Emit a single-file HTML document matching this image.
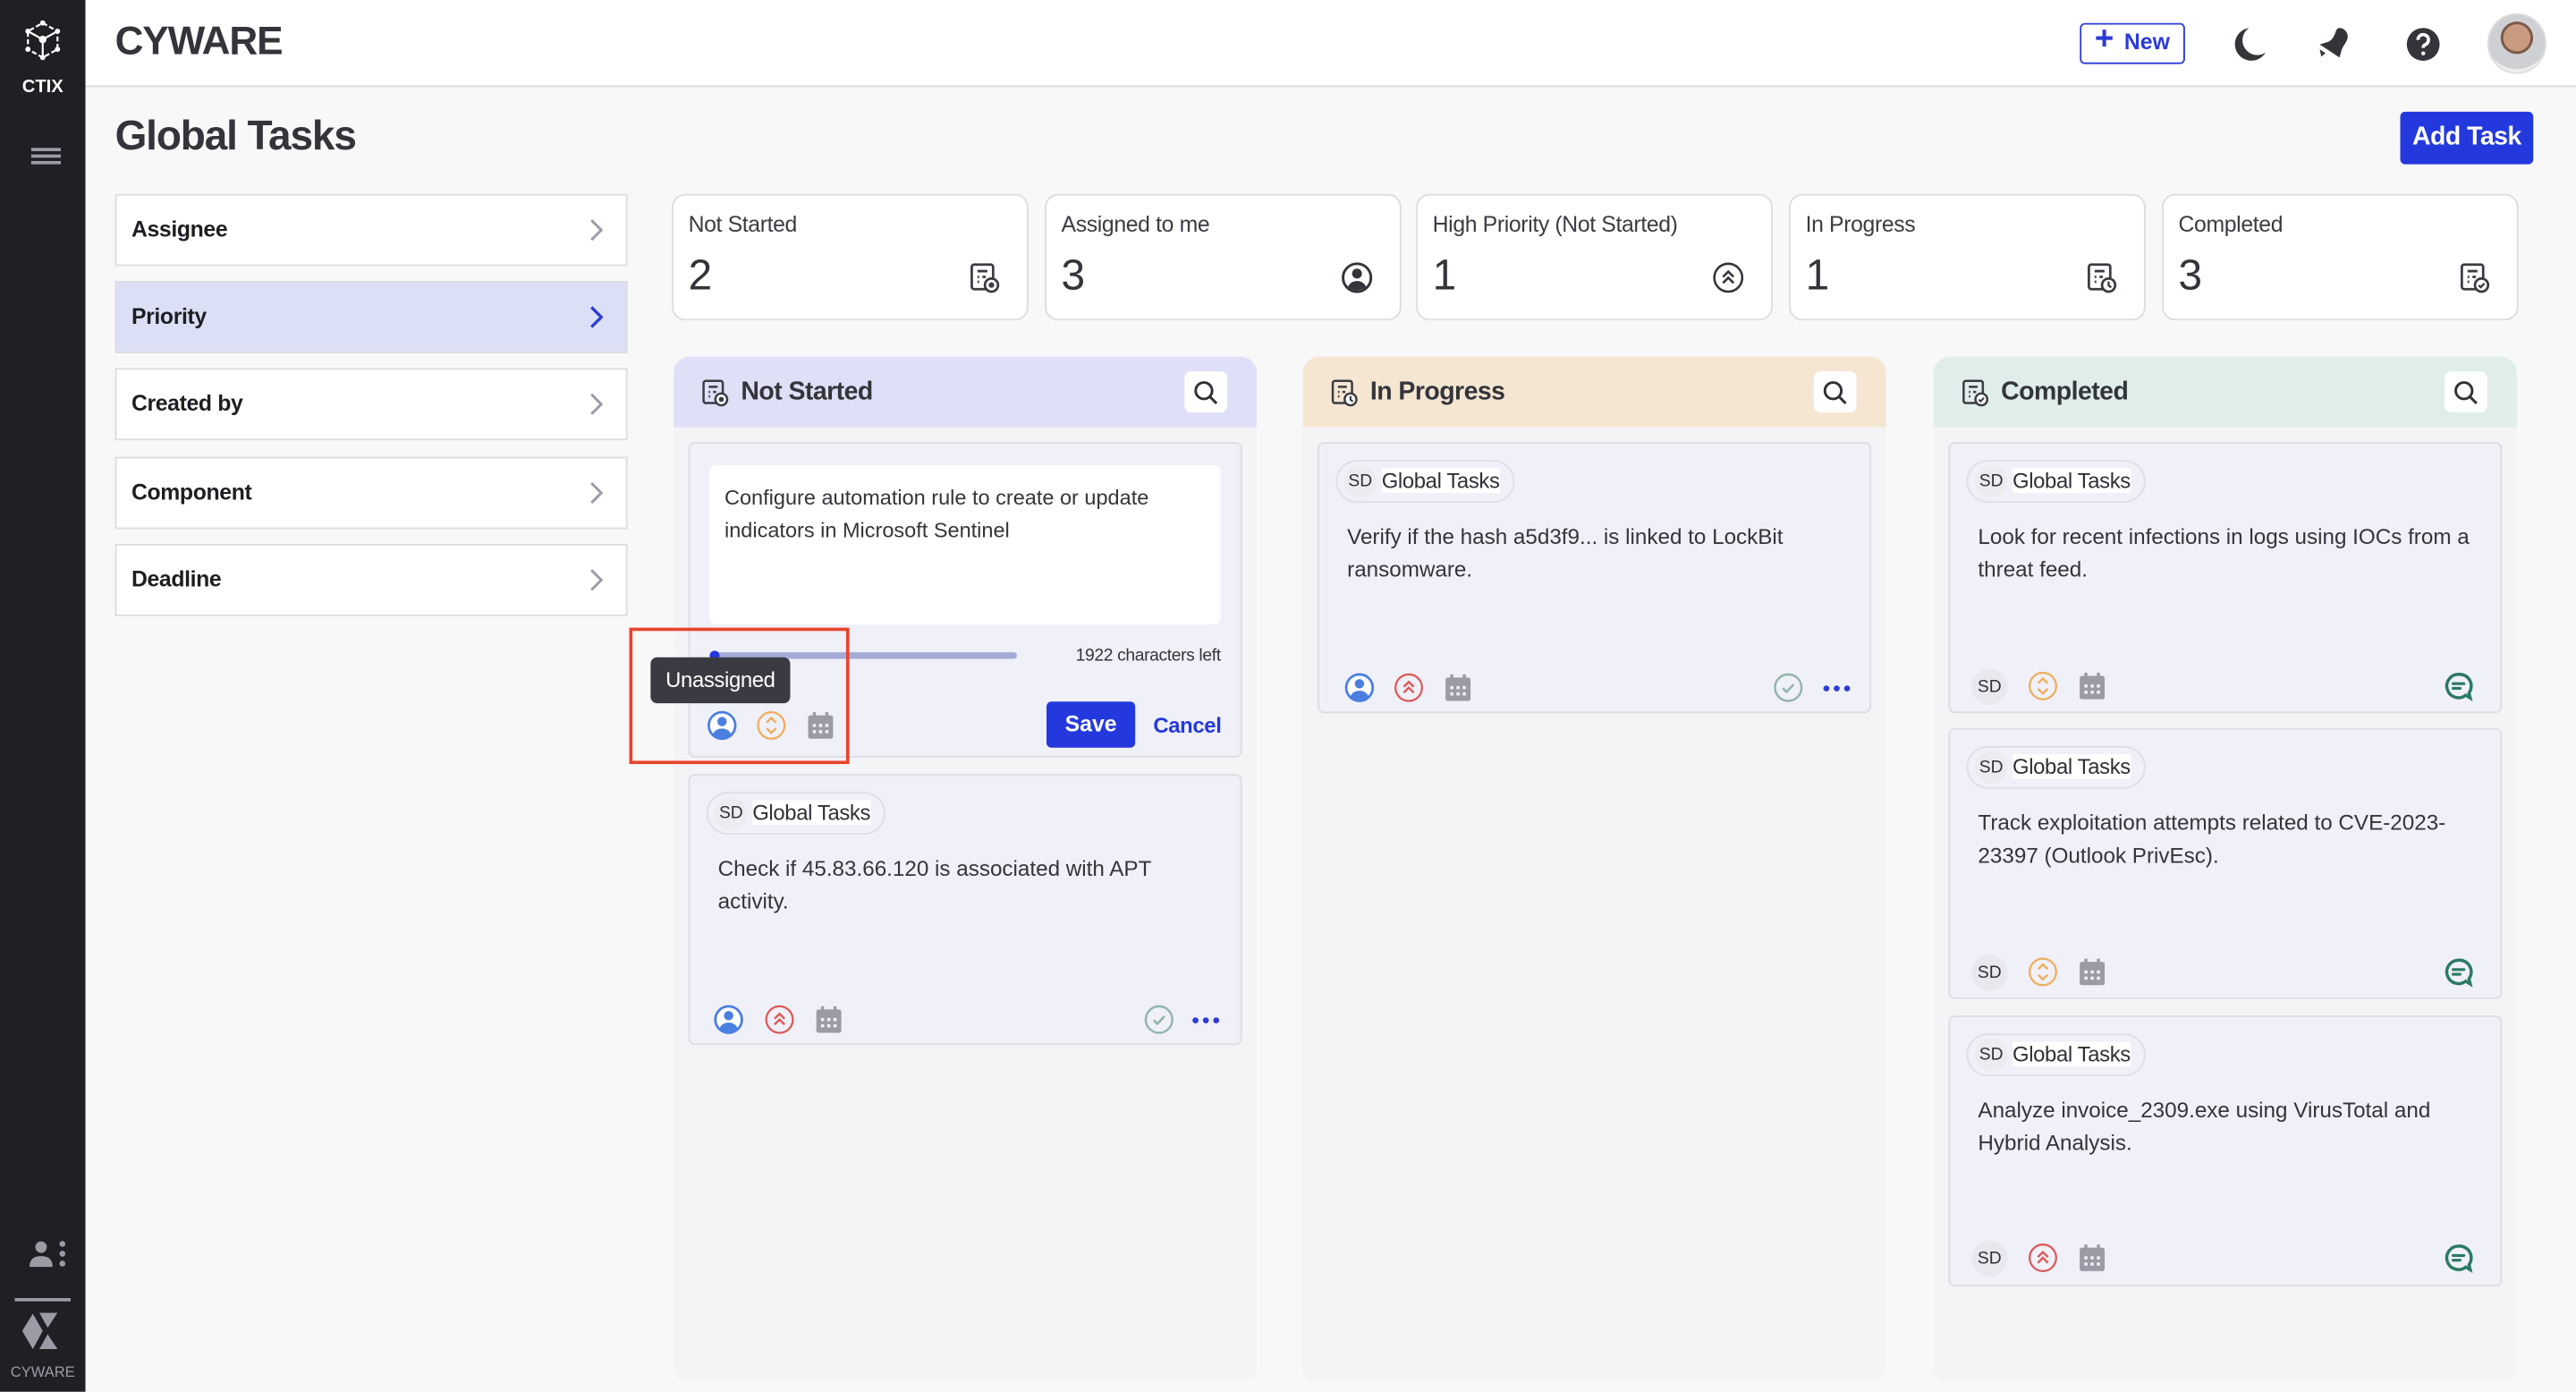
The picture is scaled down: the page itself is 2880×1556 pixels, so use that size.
<!DOCTYPE html>
<html><head><meta charset="utf-8"><style>
*{box-sizing:border-box;margin:0;padding:0}
html,body{width:2880px;height:1556px;overflow:hidden;background:#f8f8f8}
#w{position:absolute;left:0;top:0;width:1568px;height:847px;transform:scale(1.836735);transform-origin:0 0;font-family:"Liberation Sans",sans-serif;color:#2f3137}
.a{position:absolute}
.side{left:0;top:0;width:52px;height:847px;background:#1f2024}
.hdr{left:52px;top:0;width:1516px;height:53px;background:#fff;border-bottom:1.5px solid #dcdce0}
.fl{left:70px;width:312px;height:44px;background:#fff;border:1px solid #dcdce2;font-size:13.5px;font-weight:bold;color:#1d1e22;padding-left:9px;line-height:42px;letter-spacing:-0.2px}
.fl svg{position:absolute;right:14px;top:14px}
.st{top:118px;width:217px;height:77px;background:#fff;border:1px solid #dcdce2;border-radius:8px}
.st .t{position:absolute;left:9px;top:10px;font-size:13.5px;color:#3a3c42;letter-spacing:-0.2px}
.st .n{position:absolute;left:9px;top:33px;font-size:26px;color:#33353a}
.st svg{position:absolute;right:16px;top:40px}
.col{top:217px;width:355px;height:624px;background:#f4f4f6;border-radius:10px 10px 8px 8px;overflow:hidden}
.ch{position:absolute;left:0;top:0;width:355px;height:43px}
.ch .tt{position:absolute;left:41px;top:13px;font-size:15.5px;font-weight:bold;color:#33353a;letter-spacing:-0.3px}
.ch .ic{position:absolute;left:16px;top:13px}
.ch .sb{position:absolute;right:18px;top:9px;width:26px;height:25px;background:#fff;border-radius:4px}
.ch .sb svg{position:absolute;left:5px;top:5px}
.card{width:337px;background:#f0f0f8;border:1px solid #dcdce2;border-radius:4px}
.chip{position:absolute;left:10px;top:10px;height:26px;border:1px solid #dedee6;border-radius:13px;padding:0 8px 0 4px;font-size:13px;line-height:24px;white-space:nowrap;letter-spacing:-0.2px}
.chip b{font-weight:normal;font-size:10.5px;display:inline-block;width:20px;height:20px;border-radius:10px;background:#ececf0;text-align:center;line-height:20px;margin-right:3px;vertical-align:1px;letter-spacing:0}
.chip span{background:#fff}
.txt{position:absolute;left:17px;top:47px;font-size:13.2px;line-height:20px;color:#33353a;width:310px}
.ico{position:absolute}
</style></head><body><div id="w">
<svg width="0" height="0" style="position:absolute"><defs>
<symbol id="usr" viewBox="0 0 20 20"><circle cx="10" cy="10" r="8.5" fill="#fff" stroke="#4a7fe0" stroke-width="1.6"/><circle cx="10" cy="7.5" r="3" fill="#4a7fe0"/><path d="M4.2 15.6c1.2-2.6 3.3-3.6 5.8-3.6s4.6 1 5.8 3.6A8.5 8.5 0 0 1 4.2 15.6z" fill="#4a7fe0"/></symbol>
<symbol id="phi" viewBox="0 0 20 20"><circle cx="10" cy="10" r="8.5" fill="none" stroke="#dc5a5a" stroke-width="1.3"/><path d="M6.8 9.5L10 6.3l3.2 3.2M6.8 13.2L10 10l3.2 3.2" fill="none" stroke="#dc5a5a" stroke-width="1.4"/></symbol>
<symbol id="pmd" viewBox="0 0 20 20"><circle cx="10" cy="10" r="8.5" fill="none" stroke="#eeae5c" stroke-width="1.3"/><path d="M7 8.2L10 5.2l3 3M7 11.8l3 3 3-3" fill="none" stroke="#eeae5c" stroke-width="1.4"/></symbol>
<symbol id="cal" viewBox="0 0 20 20"><rect x="2" y="3.5" width="16" height="15" rx="1.5" fill="#9a9ba5"/><rect x="5" y="1.5" width="2" height="4" fill="#9a9ba5"/><rect x="13" y="1.5" width="2" height="4" fill="#9a9ba5"/><g fill="#f0f0f8"><rect x="5" y="9" width="2" height="2"/><rect x="9" y="9" width="2" height="2"/><rect x="13" y="9" width="2" height="2"/><rect x="5" y="13" width="2" height="2"/><rect x="9" y="13" width="2" height="2"/><rect x="13" y="13" width="2" height="2"/></g></symbol>
<symbol id="chk" viewBox="0 0 20 20"><circle cx="10" cy="10" r="8.5" fill="none" stroke="#93b5ab" stroke-width="1.4"/><path d="M6.5 10.3l2.4 2.4 4.6-4.8" fill="none" stroke="#93b5ab" stroke-width="1.5"/></symbol>
<symbol id="dot" viewBox="0 0 20 8"><circle cx="3" cy="4" r="2" fill="#2a3bd9"/><circle cx="10" cy="4" r="2" fill="#2a3bd9"/><circle cx="17" cy="4" r="2" fill="#2a3bd9"/></symbol>
<symbol id="cmt" viewBox="0 0 20 20"><path d="M10 2.5a7.5 7.5 0 1 0 4.6 13.4l2.9 1.8-.8-3.3A7.5 7.5 0 0 0 10 2.5z" fill="none" stroke="#2a7a63" stroke-width="2"/><path d="M6.5 8.5h7M6.5 11.5h4.5" stroke="#2a7a63" stroke-width="1.8" stroke-linecap="round"/></symbol>
<symbol id="tsk" viewBox="0 0 20 20"><rect x="2.5" y="2" width="13" height="15" rx="1.5" fill="none" stroke="#3a3c42" stroke-width="1.5"/><path d="M6 6h6M6 9.5h1M6 12.5h1M9 9.5h2" stroke="#3a3c42" stroke-width="1.5"/><circle cx="14.5" cy="14.5" r="4" fill="#fff" stroke="#3a3c42" stroke-width="1.5"/><circle cx="14.5" cy="14.5" r="1.7" fill="#3a3c42"/></symbol>
<symbol id="tskc" viewBox="0 0 20 20"><rect x="2.5" y="2" width="13" height="15" rx="1.5" fill="none" stroke="#3a3c42" stroke-width="1.5"/><path d="M6 6h6M6 9.5h1M6 12.5h1M9 9.5h2" stroke="#3a3c42" stroke-width="1.5"/><circle cx="14.5" cy="14.5" r="4" fill="#fff" stroke="#3a3c42" stroke-width="1.5"/><path d="M14.5 12.3v2.4l1.6 1.2" fill="none" stroke="#3a3c42" stroke-width="1.3"/></symbol>
<symbol id="tskk" viewBox="0 0 20 20"><rect x="2.5" y="2" width="13" height="15" rx="1.5" fill="none" stroke="#3a3c42" stroke-width="1.5"/><path d="M6 6h6M6 9.5h1M6 12.5h1M9 9.5h2" stroke="#3a3c42" stroke-width="1.5"/><circle cx="14.5" cy="14.5" r="4" fill="#fff" stroke="#3a3c42" stroke-width="1.5"/><path d="M12.8 14.6l1.2 1.2 2.2-2.3" fill="none" stroke="#3a3c42" stroke-width="1.3"/></symbol>
<symbol id="srch" viewBox="0 0 16 16"><circle cx="6.8" cy="6.8" r="5" fill="none" stroke="#2f3137" stroke-width="1.6"/><path d="M10.5 10.5l4 4" stroke="#2f3137" stroke-width="1.6"/></symbol>
</defs></svg>

<div class="a side">
<svg class="a" style="left:14px;top:12px" width="24" height="28" viewBox="0 0 24 28"><g stroke="#fff" stroke-width="1.2" fill="none"><path d="M12 2L21 7v11l-9 5-9-5V7z" stroke-dasharray="3 1.5"/><path d="M3 7l9 5 9-5M12 12v11"/></g><g fill="#fff"><circle cx="12" cy="2" r="1.6"/><circle cx="21" cy="7" r="1.6"/><circle cx="21" cy="18" r="1.6"/><circle cx="12" cy="23" r="1.6"/><circle cx="3" cy="18" r="1.6"/><circle cx="3" cy="7" r="1.6"/><circle cx="12" cy="12" r="2.3"/></g></svg>
<div class="a" style="left:0;width:52px;top:47px;text-align:center;color:#fff;font-size:11px;font-weight:bold">CTIX</div>
<div class="a" style="left:19px;top:90px;width:18px;height:2px;background:#9a9ba5;box-shadow:0 4px 0 #9a9ba5,0 8px 0 #9a9ba5"></div>
<svg class="a" style="left:16px;top:753px" width="26" height="22" viewBox="0 0 26 22"><circle cx="9" cy="6" r="3.5" fill="#9a9ba5"/><path d="M2 18c0-5 3-6.5 7-6.5s7 1.5 7 6.5z" fill="#9a9ba5"/><circle cx="22" cy="4" r="1.8" fill="#9a9ba5"/><circle cx="22" cy="10" r="1.8" fill="#9a9ba5"/><circle cx="22" cy="16" r="1.8" fill="#9a9ba5"/></svg>
<div class="a" style="left:9px;top:790px;width:34px;height:1.5px;background:#9a9ba5"></div>
<svg class="a" style="left:13px;top:797px" width="26" height="26" viewBox="0 0 26 26"><path d="M0.5 13L7 2.5 13 13 7 24z" fill="#9a9ba5"/><path d="M11 2h11l-6 9z" fill="#9a9ba5"/><path d="M16 15l6 9H11z" fill="#9a9ba5"/></svg>
<div class="a" style="left:0;width:52px;top:830px;text-align:center;color:#9a9ba5;font-size:9px">CYWARE</div>
</div>

<div class="a hdr">
<div class="a" style="left:18px;top:12px;font-size:24px;font-weight:bold;color:#33353a;letter-spacing:-0.6px">CYWARE</div>
<div class="a" style="left:1214px;top:14px;width:64px;height:25px;border:1.5px solid #2a3bd9;border-radius:3px;color:#2a3bd9;font-size:13.5px;font-weight:bold;line-height:22px;padding-left:26px">New<span class="a" style="left:8px;top:-2px;font-size:20px;font-weight:bold">+</span></div>
<svg class="a" style="left:1306px;top:15px" width="22" height="24" viewBox="0 0 22 24"><path d="M11 2a10 10 0 1 0 10 15A9 9 0 0 1 11 2z" fill="#33353a"/></svg>
<svg class="a" style="left:1357px;top:14px" width="24" height="24" viewBox="0 0 24 24"><path d="M15 3c3 0 5.5 3 5 6-.4 2.5-2.5 4.5-3.5 7l-1.5 5-12-8 5-1.5c2.5-1 3.5-3 4.5-5.5C13 4.5 13.5 3 15 3z" fill="#33353a"/><path d="M3 16l3.5 2.3-2.5 2.2z" fill="#33353a"/></svg>
<svg class="a" style="left:1412px;top:16px" width="22" height="22" viewBox="0 0 22 22"><circle cx="11" cy="11" r="10" fill="#33353a"/><path d="M7.8 8.3a3.2 3.2 0 1 1 4.2 3c-.8.4-1 .9-1 1.8" fill="none" stroke="#fff" stroke-width="2"/><circle cx="11" cy="16.5" r="1.2" fill="#fff"/></svg>
<div class="a" style="left:1462px;top:8px;width:36px;height:37px;border-radius:50%;background:radial-gradient(circle at 50% 40%,#c99a7f 0 30%,#7a5a4a 31% 36%,#cfd0d4 37% 70%,#eee 71%);border:1px solid #ddd"></div>
</div>

<div class="a" style="left:70px;top:69px;font-size:25px;font-weight:bold;color:#33353a;letter-spacing:-0.6px">Global Tasks</div>
<div class="a" style="left:1461px;top:68px;width:81px;height:32px;background:#2439dd;border-radius:3px;color:#fff;font-size:15.5px;font-weight:bold;text-align:center;line-height:32px;letter-spacing:-0.3px">Add Task</div>

<div class="a fl" style="top:118px">Assignee<svg width="8" height="14" viewBox="0 0 8 14"><path d="M1 1l6 6-6 6" fill="none" stroke="#9a9ba5" stroke-width="1.6"/></svg></div>
<div class="a fl" style="top:171px;background:#dce0f6">Priority<svg width="8" height="14" viewBox="0 0 8 14"><path d="M1 1l6 6-6 6" fill="none" stroke="#2a3bd9" stroke-width="1.8"/></svg></div>
<div class="a fl" style="top:224px">Created by<svg width="8" height="14" viewBox="0 0 8 14"><path d="M1 1l6 6-6 6" fill="none" stroke="#9a9ba5" stroke-width="1.6"/></svg></div>
<div class="a fl" style="top:278px">Component<svg width="8" height="14" viewBox="0 0 8 14"><path d="M1 1l6 6-6 6" fill="none" stroke="#9a9ba5" stroke-width="1.6"/></svg></div>
<div class="a fl" style="top:331px">Deadline<svg width="8" height="14" viewBox="0 0 8 14"><path d="M1 1l6 6-6 6" fill="none" stroke="#9a9ba5" stroke-width="1.6"/></svg></div>

<div class="a st" style="left:409px"><div class="t">Not Started</div><div class="n">2</div><svg width="20" height="20"><use href="#tsk"/></svg></div>
<div class="a st" style="left:636px"><div class="t">Assigned to me</div><div class="n">3</div><svg width="20" height="20" viewBox="0 0 20 20"><circle cx="10" cy="10" r="8.5" fill="none" stroke="#33353a" stroke-width="1.6"/><circle cx="10" cy="7.5" r="3" fill="#33353a"/><path d="M4.5 15.5c1.2-2.5 3.2-3.5 5.5-3.5s4.3 1 5.5 3.5A8 8 0 0 1 4.5 15.5z" fill="#33353a"/></svg></div>
<div class="a st" style="left:862px"><div class="t">High Priority (Not Started)</div><div class="n">1</div><svg width="20" height="20" viewBox="0 0 20 20"><circle cx="10" cy="10" r="8.5" fill="none" stroke="#33353a" stroke-width="1.4"/><path d="M6.8 9.5L10 6.3l3.2 3.2M6.8 13.2L10 10l3.2 3.2" fill="none" stroke="#33353a" stroke-width="1.4"/></svg></div>
<div class="a st" style="left:1089px"><div class="t">In Progress</div><div class="n">1</div><svg width="20" height="20"><use href="#tskc"/></svg></div>
<div class="a st" style="left:1316px"><div class="t">Completed</div><div class="n">3</div><svg width="20" height="20"><use href="#tskk"/></svg></div>

<div class="a col" style="left:410px"><div class="ch" style="background:#dfe0f8"><svg class="ic" width="18" height="18"><use href="#tsk"/></svg><div class="tt">Not Started</div><div class="sb"><svg width="16" height="16"><use href="#srch"/></svg></div></div></div>
<div class="a card" style="left:419px;top:269px;height:192px">
<div class="a" style="left:12px;top:13px;width:311px;height:97px;background:#fff;border-radius:4px;padding:10px 9px;font-size:12.8px;line-height:20px;color:#33353a">Configure automation rule to create or update indicators in Microsoft Sentinel</div>
<div class="a" style="left:12px;top:127px;width:187px;height:4px;background:#a4abd6;border-radius:2px"></div>
<div class="a" style="left:12px;top:126px;width:6px;height:6px;background:#2439dd;border-radius:3px"></div>
<div class="a" style="right:12px;top:123px;font-size:10.5px;color:#33353a;letter-spacing:-0.2px">1922 characters left</div>
<div class="a" style="left:217px;top:157px;width:54px;height:28px;background:#2439dd;border-radius:3px;color:#fff;font-size:13.5px;font-weight:bold;text-align:center;line-height:28px">Save</div>
<div class="a" style="left:282px;top:164px;color:#2439dd;font-size:13px;font-weight:bold;letter-spacing:-0.2px">Cancel</div>
<svg class="ico" style="left:10px;top:162px" width="19" height="19"><use href="#usr"/></svg>
<svg class="ico" style="left:40px;top:162px" width="19" height="19"><use href="#pmd"/></svg>
<svg class="ico" style="left:70px;top:162px" width="19" height="19"><use href="#cal"/></svg>
</div>
<div class="a" style="left:396px;top:400px;width:85px;height:28px;background:#3a3b42;border-radius:4px;color:#fff;font-size:13px;line-height:27px;text-align:center;letter-spacing:-0.2px">Unassigned</div>
<div class="a" style="left:383px;top:382px;width:134px;height:83px;border:2px solid #e8442e"></div>

<div class="a card" style="left:419px;top:471px;height:165px">
<div class="chip"><b>SD</b><span>Global Tasks</span></div>
<div class="txt">Check if 45.83.66.120 is associated with APT activity.</div>
<svg class="ico" style="left:14px;top:139px" width="19" height="19"><use href="#usr"/></svg>
<svg class="ico" style="left:45px;top:139px" width="19" height="19"><use href="#phi"/></svg>
<svg class="ico" style="left:75px;top:139px" width="19" height="19"><use href="#cal"/></svg>
<svg class="ico" style="left:276px;top:139px" width="19" height="19"><use href="#chk"/></svg>
<svg class="ico" style="left:305px;top:145px" width="18" height="8"><use href="#dot"/></svg>
</div>

<div class="a col" style="left:793px"><div class="ch" style="background:#f5e6d2"><svg class="ic" width="18" height="18"><use href="#tskc"/></svg><div class="tt">In Progress</div><div class="sb"><svg width="16" height="16"><use href="#srch"/></svg></div></div></div>
<div class="a card" style="left:802px;top:269px;height:165px">
<div class="chip"><b>SD</b><span>Global Tasks</span></div>
<div class="txt">Verify if the hash a5d3f9... is linked to LockBit ransomware.</div>
<svg class="ico" style="left:15px;top:139px" width="19" height="19"><use href="#usr"/></svg>
<svg class="ico" style="left:45px;top:139px" width="19" height="19"><use href="#phi"/></svg>
<svg class="ico" style="left:75px;top:139px" width="19" height="19"><use href="#cal"/></svg>
<svg class="ico" style="left:276px;top:139px" width="19" height="19"><use href="#chk"/></svg>
<svg class="ico" style="left:306px;top:145px" width="18" height="8"><use href="#dot"/></svg>
</div>

<div class="a col" style="left:1177px"><div class="ch" style="background:#dfeeea"><svg class="ic" width="18" height="18"><use href="#tskk"/></svg><div class="tt">Completed</div><div class="sb"><svg width="16" height="16"><use href="#srch"/></svg></div></div></div>

<div class="a card" style="left:1186px;top:269px;height:165px">
<div class="chip"><b>SD</b><span>Global Tasks</span></div>
<div class="txt">Look for recent infections in logs using IOCs from a threat feed.</div>
<div class="a" style="left:13px;top:137px;width:22px;height:22px;border-radius:11px;background:#e8e8ee;font-size:10.5px;text-align:center;line-height:22px">SD</div>
<svg class="ico" style="left:47px;top:138px" width="19" height="19"><use href="#pmd"/></svg>
<svg class="ico" style="left:77px;top:138px" width="19" height="19"><use href="#cal"/></svg>
<svg class="ico" style="left:300px;top:138px" width="19" height="19"><use href="#cmt"/></svg>
</div>
<div class="a card" style="left:1186px;top:443px;height:165px">
<div class="chip"><b>SD</b><span>Global Tasks</span></div>
<div class="txt">Track exploitation attempts related to CVE-2023-23397 (Outlook PrivEsc).</div>
<div class="a" style="left:13px;top:137px;width:22px;height:22px;border-radius:11px;background:#e8e8ee;font-size:10.5px;text-align:center;line-height:22px">SD</div>
<svg class="ico" style="left:47px;top:138px" width="19" height="19"><use href="#pmd"/></svg>
<svg class="ico" style="left:77px;top:138px" width="19" height="19"><use href="#cal"/></svg>
<svg class="ico" style="left:300px;top:138px" width="19" height="19"><use href="#cmt"/></svg>
</div>
<div class="a card" style="left:1186px;top:618px;height:165px">
<div class="chip"><b>SD</b><span>Global Tasks</span></div>
<div class="txt">Analyze invoice_2309.exe using VirusTotal and Hybrid Analysis.</div>
<div class="a" style="left:13px;top:136px;width:22px;height:22px;border-radius:11px;background:#e8e8ee;font-size:10.5px;text-align:center;line-height:22px">SD</div>
<svg class="ico" style="left:47px;top:137px" width="19" height="19"><use href="#phi"/></svg>
<svg class="ico" style="left:77px;top:137px" width="19" height="19"><use href="#cal"/></svg>
<svg class="ico" style="left:300px;top:137px" width="19" height="19"><use href="#cmt"/></svg>
</div>

</div></body></html>
